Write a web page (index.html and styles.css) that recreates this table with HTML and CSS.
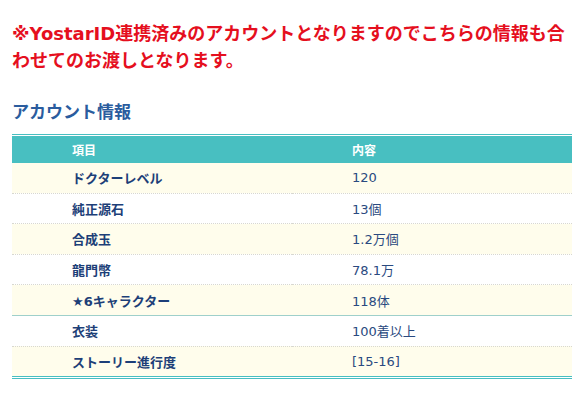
FILE: index.html
```html
<!DOCTYPE html>
<html lang="ja">
<head>
    <meta charset="UTF-8">
    <meta name="viewport" content="width=device-width, initial-scale=1.0">
    <title>アカウント情報</title>
    <link rel="stylesheet" href="styles.css">
</head>
<body>
    <div class="page">
        <!-- Notice -->
        <p class="notice">※YostarID連携済みのアカウントとなりますのでこちらの情報も合わせてのお渡しとなります。</p>

        <!-- Account table -->
        <h2 class="section-title">アカウント情報</h2>
        <div class="table-wrap">
            <table class="info-table">
                <thead>
                    <tr>
                        <th>項目</th>
                        <th>内容</th>
                    </tr>
                </thead>
                <tbody>
                    <tr><td class="label">ドクターレベル</td><td>120</td></tr>
                    <tr><td class="label">純正源石</td><td>13個</td></tr>
                    <tr><td class="label">合成玉</td><td>1.2万個</td></tr>
                    <tr><td class="label">龍門幣</td><td>78.1万</td></tr>
                    <tr class="split"><td class="label">★6キャラクター</td><td>118体</td></tr>
                    <tr><td class="label">衣装</td><td>100着以上</td></tr>
                    <tr><td class="label">ストーリー進行度</td><td>[15-16]</td></tr>
                </tbody>
            </table>
        </div>
    </div>
</body>
</html>
```

FILE: styles.css
```css
body {
    margin: 0;
    padding: 0;
    background: #fff;
    font-family: 'DejaVu Sans', 'Noto Sans CJK JP', sans-serif;
    color: #1d3f78;
}

.page {
    padding: 20px 6px 0 12px;
}

.notice {
    margin: 0;
    width: 560px;
    font-size: 18px;
    line-height: 27px;
    font-weight: bold;
    color: #e50f1e;
}

.section-title {
    margin: 26px 0 0;
    font-size: 17px;
    line-height: 24px;
    font-weight: bold;
    color: #2a5c9e;
}

.table-wrap {
    margin-top: 10px;
    width: 560px;
    border-top: 1px solid #48bfc1;
    padding-top: 1px;
    border-bottom: 3px double #48bfc1;
}

.info-table {
    width: 100%;
    border-collapse: collapse;
    font-size: 13px;
}

.info-table th,
.info-table td {
    width: 50%;
    padding: 0 0 0 60px;
    text-align: left;
}

.info-table th {
    height: 27px;
    background: #48bfc1;
    color: #fff;
    font-weight: bold;
    font-size: 12px;
}

.info-table td {
    height: 29.6px;
    border-bottom: 1px dotted #d8d8d0;
    color: #2a4a80;
}

.info-table td.label {
    font-weight: bold;
    color: #1d3f78;
}

.info-table tbody tr:nth-child(odd) {
    background: #fffdec;
}

.info-table tr.split td {
    border-bottom: 1px solid #9fd0cb;
}

.info-table tbody tr:last-child td {
    border-bottom: none;
}
```
